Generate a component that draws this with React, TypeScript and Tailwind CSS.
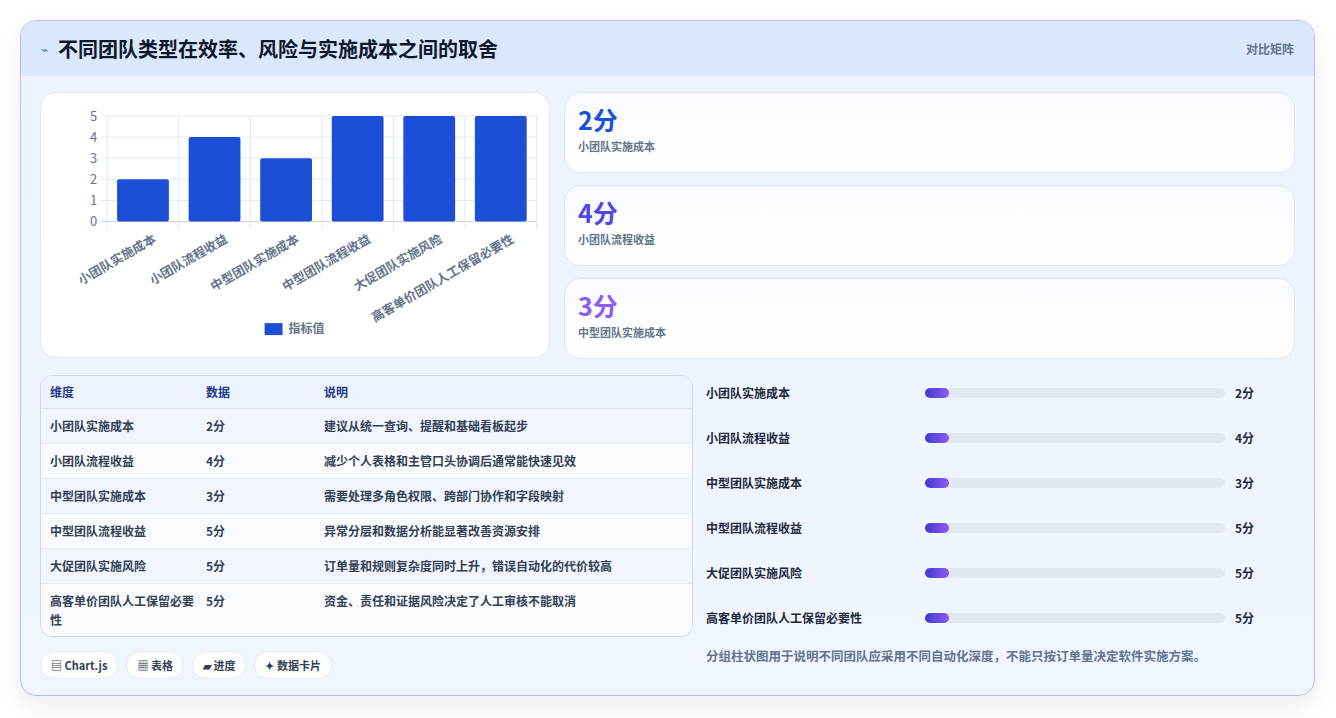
const rows = [
  ['小团队实施成本', 2, '建议从统一查询、提醒和基础看板起步'],
  ['小团队流程收益', 4, '减少个人表格和主管口头协调后通常能快速见效'],
  ['中型团队实施成本', 3, '需要处理多角色权限、跨部门协作和字段映射'],
  ['中型团队流程收益', 5, '异常分层和数据分析能显著改善资源安排'],
  ['大促团队实施风险', 5, '订单量和规则复杂度同时上升，错误自动化的代价较高'],
  ['高客单价团队人工保留必要性', 5, '资金、责任和证据风险决定了人工审核不能取消'],
] as const;

function Chart() {
  const left = 66, right = 497, y0 = 129, unit = 21.2;
  const step = (right - left) / 6;
  return (
    <svg viewBox="0 0 509 265" className="w-full h-full" style={{ fontFamily: '"Noto Sans CJK SC", sans-serif' }}>
      {[0, 1, 2, 3, 4, 5].map((v) => (
        <g key={v}>
          <line x1={left - 6} x2={right} y1={y0 - v * unit} y2={y0 - v * unit} stroke={v === 0 ? '#cbd5e1' : '#e2e8f0'} />
          <text x={left - 10} y={y0 - v * unit + 5} textAnchor="end" fontSize="13" fill="#64748b">{v}</text>
        </g>
      ))}
      {Array.from({ length: 7 }).map((_, i) => (
        <line key={i} x1={left + i * step} x2={left + i * step} y1={y0 - 5 * unit} y2={y0 + 8} stroke="#e2e8f0" />
      ))}
      {rows.map((r, i) => {
        const cx = left + step * i + step / 2;
        const h = r[1] * unit;
        return (
          <g key={i}>
            <rect x={cx - 26} y={y0 - h} width={52} height={h} rx={2} fill="#1d4ed8" />
            <text x={cx + 14} y={y0 + 20} textAnchor="end" fontSize="12.5" fontWeight="600" fill="#64748b" transform={`rotate(-30 ${cx + 14} ${y0 + 20})`}>{r[0]}</text>
          </g>
        );
      })}
      <rect x={224} y={231} width={18} height={12} fill="#1d4ed8" />
      <text x={248} y={241} fontSize="12" fontWeight="600" fill="#64748b">指标值</text>
    </svg>
  );
}

const stats = [
  ['2分', '小团队实施成本', 'text-[#1d4ed8]'],
  ['4分', '小团队流程收益', 'text-[#4f46e5]'],
  ['3分', '中型团队实施成本', 'text-[#8b5cf6]'],
];

export default function App() {
  return (
    <div className="w-[1336px] h-[718px] bg-white pt-5 pl-5 text-[#1e293b]" style={{ fontFamily: '"Noto Sans CJK SC", "Noto Sans", sans-serif' }}>
      <div className="w-[1295px] h-[676px] rounded-2xl border border-[#b4bff0] bg-gradient-to-b from-[#eef4ff] to-[#eff6ff] overflow-hidden shadow-[0_10px_25px_rgba(15,23,42,0.08)]">
        <div className="h-[55px] bg-[#dbe7fd] flex items-center justify-between px-5">
          <div className="flex items-center gap-2.5">
            <span className="text-[#4f6ef0] text-xs">⌁</span>
            <h1 className="text-[20px] font-bold text-[#0f172a]">不同团队类型在效率、风险与实施成本之间的取舍</h1>
          </div>
          <span className="text-xs font-semibold text-[#64748b]">对比矩阵</span>
        </div>
        <div className="px-[19px] pt-[16px]">
          <div className="flex gap-[14px]">
            <div className="w-[510px] h-[266px] bg-white rounded-2xl border border-[#e2e8f0]">
              <Chart />
            </div>
            <div className="flex-1 flex flex-col gap-3">
              {stats.map(([v, l, c]) => (
                <div key={l} className="h-[81px] rounded-2xl border border-[#dbe5f5] bg-gradient-to-b from-[#f8fbff] to-white px-[13px] pt-[9px]">
                  <div className={`text-[25px] font-bold leading-[34px] ${c}`}>{v}</div>
                  <div className="text-[11px] font-semibold text-[#64748b] mt-0.5">{l}</div>
                </div>
              ))}
            </div>
          </div>
          <div className="flex gap-[13px] mt-4">
            <div className="w-[653px]">
              <div className="rounded-xl border border-[#cfd8ea] overflow-hidden bg-white">
                <div className="grid grid-cols-[156px_118px_1fr] h-[33px] items-center px-[9px] bg-[#eef4ff] text-[12px] font-bold text-[#1e3a8a] border-b border-[#dbe3f1]">
                  <span>维度</span><span>数据</span><span>说明</span>
                </div>
                {rows.map((r, i) => (
                  <div key={i} className={`grid grid-cols-[156px_118px_1fr] px-[9px] text-[12px] font-semibold text-[#334155] ${i < 5 ? 'h-[35px] items-center border-b border-[#e6ecf5]' : 'h-[52px] pt-[7px] leading-[19px]'} ${i % 2 === 0 ? 'bg-[#f1f5fd]' : 'bg-[#f8fafd]'}`}>
                    <span className="pr-2">{r[0]}</span><span>{r[1]}分</span><span>{r[2]}</span>
                  </div>
                ))}
              </div>
              <div className="flex gap-2 mt-[14px]">
                {['▤ Chart.js', '▦ 表格', '▰ 进度', '✦ 数据卡片'].map((t) => (
                  <span key={t} className="h-[28px] px-2.5 flex items-center rounded-full bg-white border border-[#e5eaf3] text-[11px] font-bold text-[#334155]">{t}</span>
                ))}
              </div>
            </div>
            <div className="flex-1 -mt-[5px]">
              <div className="flex flex-col">
                {rows.map((r, i) => (
                  <div key={i} className="h-[45px] flex items-center text-[12px] font-semibold text-[#1e293b]">
                    <span className="w-[219px]">{r[0]}</span>
                    <div className="w-[300px] h-[10px] rounded-full bg-[#e2e8f0]">
                      <div className="w-[24px] h-full rounded-full bg-gradient-to-r from-[#4338ca] to-[#8b5cf6]" />
                    </div>
                    <span className="ml-[10px] font-bold">{r[1]}分</span>
                  </div>
                ))}
              </div>
              <p className="mt-[7px] text-[12.5px] font-semibold text-[#64748b]">分组柱状图用于说明不同团队应采用不同自动化深度，不能只按订单量决定软件实施方案。</p>
            </div>
          </div>
        </div>
      </div>
    </div>
  );
}
